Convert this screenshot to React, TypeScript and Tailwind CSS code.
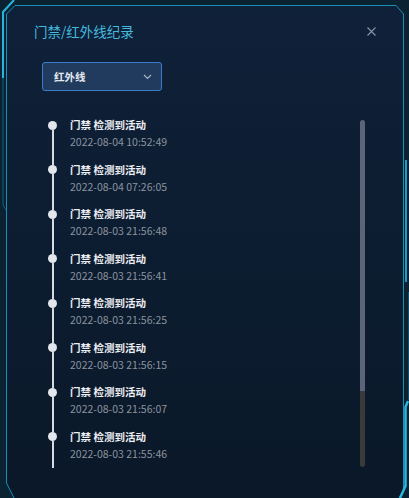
import { useState } from "react";

interface IRecord {
  title: string;
  time: string;
}

const records: IRecord[] = [
  { title: "门禁 检测到活动", time: "2022-08-04 10:52:49" },
  { title: "门禁 检测到活动", time: "2022-08-04 07:26:05" },
  { title: "门禁 检测到活动", time: "2022-08-03 21:56:48" },
  { title: "门禁 检测到活动", time: "2022-08-03 21:56:41" },
  { title: "门禁 检测到活动", time: "2022-08-03 21:56:25" },
  { title: "门禁 检测到活动", time: "2022-08-03 21:56:15" },
  { title: "门禁 检测到活动", time: "2022-08-03 21:56:07" },
  { title: "门禁 检测到活动", time: "2022-08-03 21:55:46" },
];

// the chamfered cyan frame of the dialog
const Frame = () => (
  <svg className="absolute inset-0 pointer-events-none" width="409" height="498" viewBox="0 0 409 498">
    <defs>
      <linearGradient id="panelBg" x1="0" y1="0" x2="0" y2="1">
        <stop offset="0" stopColor="#0f2139" />
        <stop offset="1" stopColor="#0a1828" />
      </linearGradient>
    </defs>
    <path d="M15 5 L396 5 L404 14 L404 490 L400 498 L14 498 L6 483 L6 14 Z" fill="url(#panelBg)" />
    <path d="M15 5.5 L396 5.5 L403.5 14 L403.5 490 L399 498" fill="none" stroke="#1790b4" strokeWidth="1" />
    <path d="M6.5 14 L6.5 483 L14 498" fill="none" stroke="#1790b4" strokeWidth="1" />
    <path d="M15 5.5 L6.5 14" fill="none" stroke="#1790b4" strokeWidth="1" />
    <path d="M14 0 L3 12 L3 78" fill="none" stroke="#27b4dc" strokeWidth="2" />
    <path d="M3 78 L3 205 L6 210" fill="none" stroke="#11607e" strokeWidth="1" />
    <path d="M406 160 L406 282" fill="none" stroke="#1a9cc4" strokeWidth="2" />
    <path d="M408 401 L405.5 407 L405.5 486 L400 498" fill="none" stroke="#2ab6de" strokeWidth="2.5" />
    <path d="M409 292 L409 400" fill="none" stroke="#0f4e68" strokeWidth="2" />
  </svg>
);

const App = () => {
  const [kind] = useState("红外线");

  return (
    <div className="relative w-[409px] h-[498px] overflow-hidden bg-[#0b2233] font-['Noto_Sans_CJK_SC',sans-serif]">
      <Frame />
      <div className="relative flex flex-col pt-[24px] pl-[34px] pr-[31px]">
        <div className="flex items-center justify-between h-[14px]">
          <span className="text-[13.5px] leading-[14px] text-[#45b9df] whitespace-nowrap">门禁/红外线纪录</span>
          <svg width="9" height="9" viewBox="0 0 9 9" className="mr-[2px]">
            <path d="M0.5 0.5 L8.5 8.5 M8.5 0.5 L0.5 8.5" stroke="#8794a4" strokeWidth="1.1" />
          </svg>
        </div>

        <div className="ml-[8px] mt-[24px] flex items-center justify-between w-[120px] h-[29px] pl-[11px] pr-[9px] rounded-[3px] border border-[#3b7bc9] bg-[#203b5e]">
          <span className="text-[10.5px] font-bold text-[#e6e9ef]">{kind}</span>
          <svg width="9" height="6" viewBox="0 0 9 6">
            <path d="M1 1 L4.5 4.5 L8 1" fill="none" stroke="#a9b5c5" strokeWidth="1.2" />
          </svg>
        </div>

        <div className="mt-[27px] ml-[14px] flex">
          {/* timeline */}
          <div className="w-[312px] h-[350px] overflow-hidden">
            {records.map((r, i) => (
              <div key={i} className="flex h-[44.5px]">
                <div className="flex-none w-[9px] flex flex-col items-center">
                  <div className={i === 0 ? "h-[2.5px] w-[2px]" : "h-[2.5px] w-[2px] bg-[#d6dae1]"} />
                  <div className="w-[9px] h-[9px] rounded-full bg-[#e3e6ec]" />
                  <div className="flex-1 w-[2px] bg-[#d6dae1]" />
                </div>
                <div className="ml-[13px] flex flex-col">
                  <span className="text-[10.5px] leading-[14px] font-bold text-[#eceef2] whitespace-nowrap">{r.title}</span>
                  <span className="mt-[3px] text-[10.5px] leading-[14px] text-[#8b939f] whitespace-nowrap">{r.time}</span>
                </div>
              </div>
            ))}
          </div>
          {/* scrollbar */}
          <div className="mt-[2px] w-[4.5px] h-[347px] flex flex-col rounded-full overflow-hidden">
            <div className="h-[271px] bg-[#5b6479]" />
            <div className="flex-1 bg-[#3a3a38]" />
          </div>
        </div>
      </div>
    </div>
  );
};

export default App;
